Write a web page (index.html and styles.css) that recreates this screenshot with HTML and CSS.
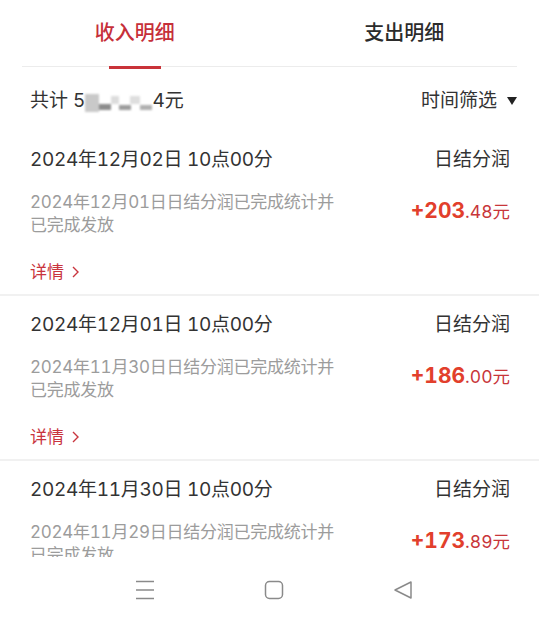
FILE: index.html
```
<!DOCTYPE html>
<html>
<head>
  <meta charset="utf-8">
  <title>收入明细</title>
  <link rel="stylesheet" href="styles.css">
</head>
<body>
  <div class="screen">
    <div class="tabs">
      <div class="tab tab-active">收入明细</div>
      <div class="tab">支出明细</div>
    </div>
    <div class="tabs-line"></div>

    <div class="list">
      <div class="summary">
        <div class="total">共计 5<span class="masked"></span>4元</div>
        <div class="filter">
          时间筛选
          <svg width="10" height="8" viewBox="0 0 10 8"><polygon points="0,0 10,0 5,8" fill="#222"/></svg>
        </div>
      </div>

      <div class="item">
        <div class="item-head">
          <span class="item-date">2024年12月02日 10点00分</span>
          <span class="item-type">日结分润</span>
        </div>
        <div class="item-body">
          <p class="item-desc">2024年12月01日日结分润已完成统计并已完成发放</p>
          <div class="amount"><span class="amount-int">+203</span>.48元</div>
        </div>
        <div class="item-more">详情
          <svg width="7" height="12" viewBox="0 0 7 12"><polyline points="1,1 6,6 1,11" fill="none" stroke="#c9353e" stroke-width="1.4"/></svg>
        </div>
      </div>

      <div class="item">
        <div class="item-head">
          <span class="item-date">2024年12月01日 10点00分</span>
          <span class="item-type">日结分润</span>
        </div>
        <div class="item-body">
          <p class="item-desc">2024年11月30日日结分润已完成统计并已完成发放</p>
          <div class="amount"><span class="amount-int">+186</span>.00元</div>
        </div>
        <div class="item-more">详情
          <svg width="7" height="12" viewBox="0 0 7 12"><polyline points="1,1 6,6 1,11" fill="none" stroke="#c9353e" stroke-width="1.4"/></svg>
        </div>
      </div>

      <div class="item">
        <div class="item-head">
          <span class="item-date">2024年11月30日 10点00分</span>
          <span class="item-type">日结分润</span>
        </div>
        <div class="item-body">
          <p class="item-desc">2024年11月29日日结分润已完成统计并已完成发放</p>
          <div class="amount"><span class="amount-int">+173</span>.89元</div>
        </div>
        <div class="item-more">详情
          <svg width="7" height="12" viewBox="0 0 7 12"><polyline points="1,1 6,6 1,11" fill="none" stroke="#c9353e" stroke-width="1.4"/></svg>
        </div>
      </div>
    </div>

    <div class="navbar">
      <svg width="20" height="20" viewBox="0 0 20 20">
        <path d="M1 1.5H19M1 10H19M1 18.5H19" stroke="#8a8a8a" stroke-width="1.5" fill="none"/>
      </svg>
      <svg width="20" height="20" viewBox="0 0 20 20">
        <rect x="1.5" y="1.5" width="17" height="17" rx="4" stroke="#8a8a8a" stroke-width="1.5" fill="none"/>
      </svg>
      <svg width="20" height="20" viewBox="0 0 20 20">
        <path d="M2 10L18 2V18Z" stroke="#8a8a8a" stroke-width="1.5" stroke-linejoin="round" fill="none"/>
      </svg>
    </div>
  </div>
</body>
</html>
```

FILE: styles.css
```
body {
  margin: 0;
  background: #fff;
  font-family: Inter, "Noto Sans CJK SC", sans-serif;
  font-variant-numeric: tabular-nums;
  color: #333;
}

.screen {
  display: flex;
  flex-direction: column;
  height: 622px;
  overflow: hidden;
}

/* tabs */
.tabs {
  display: flex;
  height: 66px;
}
.tab {
  flex: 1;
  position: relative;
  text-align: center;
  line-height: 66px;
  font-size: 20px;
  font-weight: 500;
  color: #2b2b2b;
}
.tab-active {
  color: #c62f3a;
}
.tab-active::after {
  content: "";
  position: absolute;
  left: 50%;
  bottom: -3px;
  width: 52px;
  height: 3px;
  margin-left: -26px;
  background: #c93339;
  z-index: 1;
}
.tabs-line {
  height: 1px;
  margin: 0 22px;
  background: #ececec;
}

/* list */
.list {
  flex: 1;
  overflow: hidden;
}
.summary {
  display: flex;
  justify-content: space-between;
  align-items: center;
  padding: 21px 22px 17px 30px;
  line-height: 26px;
  font-size: 19px;
}
.masked {
  display: inline-block;
  width: 67px;
  height: 18px;
  vertical-align: -5px;
  filter: blur(1px);
  background:
    linear-gradient(#c9c9c9, #c9c9c9) 0 0 / 14px 18px no-repeat,
    linear-gradient(#8c8c8c, #8c8c8c) 14px 10px / 12px 6px no-repeat,
    linear-gradient(#dcdcdc, #dcdcdc) 26px 2px / 8px 8px no-repeat,
    linear-gradient(#9c9c9c, #9c9c9c) 34px 11px / 12px 5px no-repeat,
    linear-gradient(#dedede, #dedede) 45px 2px / 10px 8px no-repeat,
    linear-gradient(#b0b0b0, #b0b0b0) 55px 11px / 12px 5px no-repeat;
}
.filter {
  display: flex;
  align-items: center;
  gap: 10px;
}

.item {
  padding: 16px 29px 10px 30px;
  border-bottom: 2px solid #f1f1f1;
}
.item-head {
  display: flex;
  justify-content: space-between;
  line-height: 26px;
  font-size: 19px;
}
.item-date {
  letter-spacing: -0.3px;
}
.item-body {
  display: flex;
  justify-content: space-between;
  align-items: center;
  margin-top: 18px;
}
.item-desc {
  margin: 0;
  width: 310px;
  font-size: 17px;
  line-height: 23px;
  letter-spacing: -0.25px;
  color: #9c9c9c;
}
.amount {
  padding-bottom: 8px;
  font-size: 17.5px;
  color: #c8363a;
}
.amount-int {
  font-size: 21px;
  font-weight: 700;
  color: #e23f2c;
}
.item-more {
  display: flex;
  align-items: center;
  gap: 8px;
  margin-top: 23px;
  line-height: 24px;
  font-size: 17px;
  color: #c9353e;
}

/* system nav */
.navbar {
  display: flex;
  justify-content: center;
  align-items: center;
  gap: 109px;
  height: 65px;
  padding-left: 8px;
  background: #fff;
}
```
